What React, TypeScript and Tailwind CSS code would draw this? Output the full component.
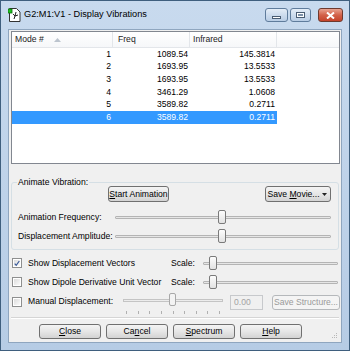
import { ReactNode } from 'react';

const rows = [
  { mode: 1, freq: '1089.54', ir: '145.3814' },
  { mode: 2, freq: '1693.95', ir: '13.5533' },
  { mode: 3, freq: '1693.95', ir: '13.5533' },
  { mode: 4, freq: '3461.29', ir: '1.0608' },
  { mode: 5, freq: '3589.82', ir: '0.2711' },
  { mode: 6, freq: '3589.82', ir: '0.2711' },
];

const TitleIcon = () => (
  <svg width="13" height="14" viewBox="0 0 13 14">
    <path d="M1.5 0.5h7l3.5 3.5v9.5h-10.5z" fill="#fff" stroke="#333" />
    <rect x="0" y="1" width="4" height="4" fill="#1fc21f" stroke="#0a6b0a" strokeWidth="0.8" />
    <path d="M5 6l2 2l-1 3M7 8l3-1M8 4l-1 4" stroke="#222" strokeWidth="1" fill="none" />
  </svg>
);

const CaptionButton = ({ kind }: { kind: 'min' | 'max' | 'close' }) => {
  if (kind === 'close') {
    return (
      <div className="w-[25px] h-[14px] rounded-[3px] border border-[#6e3a2e] bg-gradient-to-b from-[#e9a391] via-[#d2624a] to-[#c5432a] flex items-center justify-center">
        <svg width="9" height="7" viewBox="0 0 9 7">
          <path d="M1 0.5l7 6M8 0.5l-7 6" stroke="#fff" strokeWidth="2" />
        </svg>
      </div>
    );
  }
  return (
    <div
      className={`${kind === 'min' ? 'w-[23px]' : 'w-[21px]'} h-[14px] rounded-[3px] border border-[#5f7c9c] bg-gradient-to-b from-[#e4edf7] via-[#cddcee] to-[#b9cde5] flex items-center justify-center`}
    >
      {kind === 'min' ? (
        <div className="w-[9px] h-[3px] bg-white border border-[#4a5d73] mt-[4px]" />
      ) : (
        <div className="w-[9px] h-[6px] bg-white border border-[#4a5d73] flex items-center justify-center">
          <div className="w-[5px] h-[2px] bg-[#7b90a8]" />
        </div>
      )}
    </div>
  );
};

const Button = ({ children, className = '', disabled = false }: { children: ReactNode; className?: string; disabled?: boolean }) => (
  <div
    className={`rounded-[3px] border flex items-center justify-center ${
      disabled
        ? 'border-[#b5b8bb] bg-[#f4f4f4] text-[#9a9a9a]'
        : 'border-[#707070] bg-gradient-to-b from-[#f4f4f4] via-[#e6e6e6] to-[#d3d3d3] text-black'
    } ${className}`}
  >
    {children}
  </div>
);

const Thumb = () => (
  <div className="w-[8px] h-[14px] rounded-[2px] border border-[#7a7a7a] bg-gradient-to-b from-[#fdfdfd] to-[#e2e2e2]" />
);

const Slider = ({ pos, className = '' }: { pos: number; className?: string }) => (
  <div className={`relative h-[16px] flex items-center ${className}`}>
    <div className="w-full h-[3px] border border-[#b4b4b4] bg-[#e6e6e6] rounded-[1px]" />
    <div className="absolute top-[1px]" style={{ left: pos }}>
      <Thumb />
    </div>
  </div>
);

const Checkbox = ({ checked = false, className = '' }: { checked?: boolean; className?: string }) => (
  <div className={`w-[10px] h-[10px] border border-[#8e8f8f] bg-white p-[1px] shrink-0 ${className}`}>
    <div className="w-full h-full bg-gradient-to-br from-[#dcdcdc] to-[#fbfbfb] flex items-center justify-center">
      {checked && (
        <svg width="7" height="7" viewBox="0 0 7 7">
          <path d="M0.8 3.6l1.8 2l3.6-5" stroke="#3a5a99" strokeWidth="1.4" fill="none" />
        </svg>
      )}
    </div>
  </div>
);

const U = ({ children }: { children: ReactNode }) => <span className="underline">{children}</span>;

export default function App() {
  return (
    <div
      className="w-[350px] h-[351px] flex flex-col border border-[#3f5f7e] bg-gradient-to-b from-[#c8daee] to-[#b6cce5] overflow-hidden text-[8.6px] text-black"
      style={{ fontFamily: '"Liberation Sans", Arial, sans-serif' }}
    >
      {/* title bar */}
      <div className="h-[28px] flex items-center pl-[7px] pr-[6px] shrink-0">
        <TitleIcon />
        <span className="ml-[3px] text-[9.2px] text-black">G2:M1:V1 - Display Vibrations</span>
        <div className="ml-auto flex gap-[2px]">
          <CaptionButton kind="min" />
          <CaptionButton kind="max" />
          <div className="w-[3px]" />
          <CaptionButton kind="close" />
        </div>
      </div>

      {/* client area */}
      <div className="mx-[7px] h-[314px] shrink-0 bg-[#f0f0f0] border border-[#8fa6bf] flex flex-col pl-[2px] pr-[1px]">
        {/* list view */}
        <div className="mt-[1px] w-[329px] h-[133px] shrink-0 border border-[#828790] bg-white flex flex-col">
          <div className="h-[16px] flex border-b border-[#e3e6ea] bg-gradient-to-b from-white to-[#f6f7f9] text-[#1c1c1c] shrink-0">
            <div className="w-[101px] flex items-center pl-[3px] border-r border-[#e3e6ea]">
              Mode #
              <svg className="ml-[10px]" width="7" height="4" viewBox="0 0 7 4">
                <path d="M0 4l3.5-4l3.5 4z" fill="#bcc4ce" />
              </svg>
            </div>
            <div className="w-[77px] flex items-center pl-[5px] border-r border-[#e3e6ea]">Freq</div>
            <div className="w-[87px] flex items-center pl-[3px] border-r border-[#e3e6ea]">Infrared</div>
            <div className="flex-1" />
          </div>
          {rows.map((r) => {
            const sel = r.mode === 6;
            return (
              <div key={r.mode} className="h-[12.6px] flex">
                <div className={`w-[265px] flex items-center ${sel ? 'bg-[#3399ff] text-white' : ''}`}>
                  <div className="w-[101px] text-right pr-[2px]">{r.mode}</div>
                  <div className="w-[77px] text-right pr-[2px]">{r.freq}</div>
                  <div className="w-[87px] text-right pr-[2px]">{r.ir}</div>
                </div>
              </div>
            );
          })}
        </div>

        {/* animate vibration group */}
        <div className="mt-[13px] flex flex-col shrink-0">
          <div className="relative z-10 ml-[6px] -mb-[5px] w-max px-[1px] bg-[#f0f0f0] leading-[10px]">
            Animate Vibration:
          </div>
          <div className="w-[328px] h-[68px] border border-[#d5dfe5] rounded-[3px] flex flex-col pt-[3px] pl-[6px] pr-[7px]">
            <div className="flex">
              <Button className="ml-[90px] w-[61px] h-[16px]">
                <span>
                  <U>S</U>tart Animation
                </span>
              </Button>
              <Button className="ml-auto w-[66px] h-[16px] pr-[2px]">
                <span>
                  Save <U>M</U>ovie...
                </span>
                <svg className="ml-[2px]" width="5" height="3" viewBox="0 0 5 3">
                  <path d="M0 0h5l-2.5 3z" fill="#222" />
                </svg>
              </Button>
            </div>
            <div className="mt-[7px] flex items-center h-[16px]">
              <span className="w-[97px]">Animation Frequency:</span>
              <Slider pos={103} className="flex-1" />
            </div>
            <div className="mt-[3px] flex items-center h-[16px]">
              <span className="w-[97px]">Displacement Amplitude:</span>
              <Slider pos={103} className="flex-1" />
            </div>
          </div>
        </div>

        {/* checkbox rows */}
        <div className="mt-[5px] flex items-center h-[16px] pl-[1px] shrink-0">
          <Checkbox checked />
          <span className="ml-[6px] w-[143px]">Show Displacement Vectors</span>
          <span className="w-[32px]">Scale:</span>
          <Slider pos={6} className="flex-1 mr-[2px]" />
        </div>
        <div className="mt-[3px] flex items-center h-[16px] pl-[1px] shrink-0">
          <Checkbox />
          <span className="ml-[6px] w-[143px]">Show Dipole Derivative Unit Vector</span>
          <span className="w-[32px]">Scale:</span>
          <Slider pos={6} className="flex-1 mr-[2px]" />
        </div>
        <div className="mt-[4px] flex items-start h-[22px] pl-[1px] shrink-0">
          <Checkbox className="mt-[3px]" />
          <span className="ml-[6px] w-[95px] mt-[1px] leading-[13px]">Manual Displacement:</span>
          <div className="w-[100px] flex flex-col -mt-[2px]">
            <div className="relative h-[16px] flex items-center">
              <div className="w-full h-[3px] border border-[#c4c4c4] bg-[#ececec]" />
              <div className="absolute top-[1px] left-[46px] w-[7px] h-[13px] rounded-[2px] border border-[#a8a8a8] bg-[#f3f3f3]" />
            </div>
            <div className="flex justify-between px-[3px] mt-[3px]">
              {Array.from({ length: 9 }).map((_, i) => (
                <div key={i} className="w-[1px] h-[3px] bg-[#b0b0b0]" />
              ))}
            </div>
          </div>
          <div className="ml-[7px] mt-[1px] w-[33px] h-[15px] border border-[#c7c9cc] bg-[#f0f0f0] text-[#a3a3a3] flex items-center pl-[3px]">
            0.00
          </div>
          <Button disabled className="ml-[9px] mt-[1px] w-[68px] h-[15px]">
            <span>Save Structure...</span>
          </Button>
        </div>

        {/* separator */}
        <div className="mt-[1px] w-[328px] border-t border-[#d5d5d5] border-b border-b-white shrink-0" />

        {/* bottom buttons */}
        <div className="mt-[5px] flex gap-[5px] pl-[28px] items-center shrink-0">
          <Button className="w-[62px] h-[15px]">
            <span>
              <U>C</U>lose
            </span>
          </Button>
          <Button className="w-[62px] h-[15px]">
            <span>
              Ca<U>n</U>cel
            </span>
          </Button>
          <Button className="w-[62px] h-[15px]">
            <span>
              <U>S</U>pectrum
            </span>
          </Button>
          <Button className="w-[62px] h-[15px]">
            <span>
              <U>H</U>elp
            </span>
          </Button>
          <svg className="ml-auto mr-[2px] mt-[8px]" width="7" height="7" viewBox="0 0 7 7">
            <g fill="#b8b8b8">
              <rect x="5" y="1" width="1" height="1" />
              <rect x="3" y="3" width="1" height="1" />
              <rect x="5" y="3" width="1" height="1" />
              <rect x="1" y="5" width="1" height="1" />
              <rect x="3" y="5" width="1" height="1" />
              <rect x="5" y="5" width="1" height="1" />
            </g>
          </svg>
        </div>
      </div>
    </div>
  );
}
